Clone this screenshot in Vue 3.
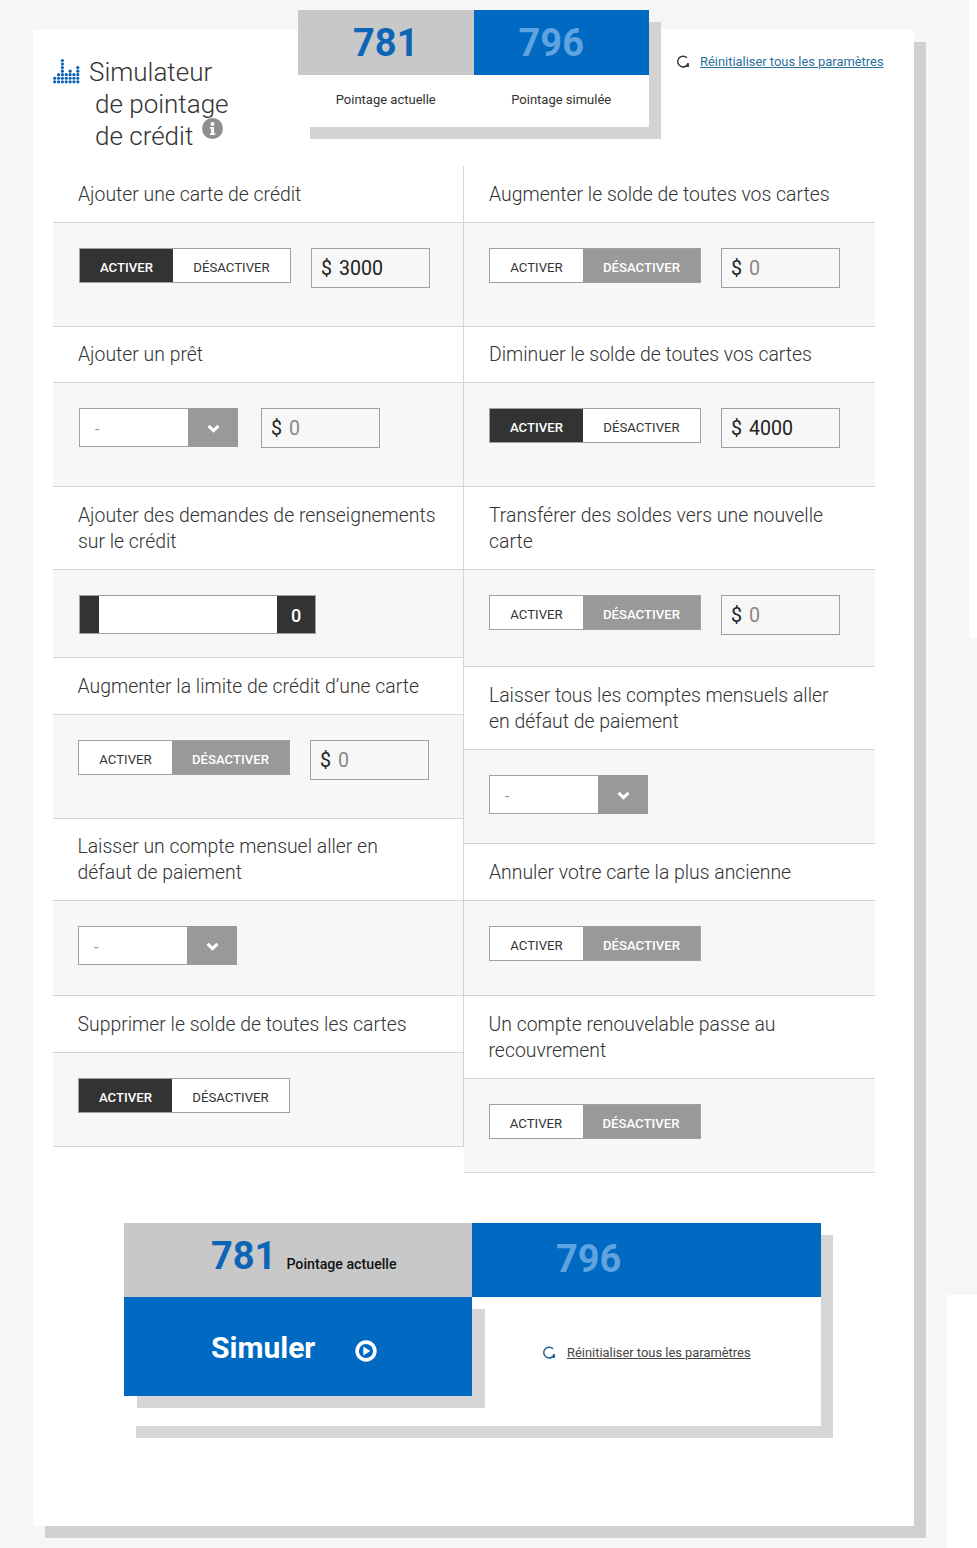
<script setup>
const leftRows = [
  { title: 'Ajouter une carte de crédit', titleH: 56, bodyH: 104, kind: 'toggle', on: true, value: '3000', pad: 26 },
  { title: 'Ajouter un prêt', titleH: 56, bodyH: 104, kind: 'select', value: '0', pad: 26 },
  { title: 'Ajouter des demandes de renseignements sur le crédit', titleH: 83, bodyH: 88, kind: 'slider', pad: 26 },
  { title: 'Augmenter la limite de crédit d’une carte', titleH: 57, bodyH: 104, kind: 'toggle', on: false, value: '0', pad: 25, tight: true },
  { title: 'Laisser un compte mensuel aller en défaut de paiement', titleH: 82, bodyH: 95, kind: 'select', pad: 25, tight: true },
  { title: 'Supprimer le solde de toutes les cartes', titleH: 57, bodyH: 94, kind: 'toggle', on: true, pad: 25, tight: true }
]
const rightRows = [
  { title: 'Augmenter le solde de toutes vos cartes', titleH: 56, bodyH: 104, kind: 'toggle', on: false, value: '0', pad: 25 },
  { title: 'Diminuer le solde de toutes vos cartes', titleH: 56, bodyH: 104, kind: 'toggle', on: true, value: '4000', pad: 25 },
  { title: 'Transférer des soldes vers une nouvelle carte', titleH: 83, bodyH: 97, kind: 'toggle', on: false, value: '0', pad: 25 },
  { title: 'Laisser tous les comptes mensuels aller en défaut de paiement', titleH: 83, bodyH: 94, kind: 'select', pad: 25 },
  { title: 'Annuler votre carte la plus ancienne', titleH: 57, bodyH: 95, kind: 'toggle', on: false, pad: 25 },
  { title: 'Un compte renouvelable passe au recouvrement', titleH: 83, bodyH: 94, kind: 'toggle', on: false, pad: 24.5, tight: true }
]
const columns = [
  { id: 'left', rows: leftRows },
  { id: 'right', rows: rightRows }
]
const barHeights = [2, 3, 7, 3, 4, 3, 5]
const dots = barHeights.flatMap((h, col) =>
  Array.from({ length: h }, (_, row) => ({ x: col * 3.85 + 1.7, y: 23.8 - row * 3.55 }))
)
</script>

<template>
  <div class="page">
    <main class="card">
      <header class="head">
        <div class="brand">
          <svg class="bars" viewBox="0 0 27 26" width="27" height="26">
            <circle v-for="(d, i) in dots" :key="i" :cx="d.x" :cy="d.y" r="1.6" fill="#0b62b4" />
          </svg>
          <h1 class="brand-title">
            <span class="l1">Simulateur</span>
            <span class="l2">de pointage</span>
            <span class="l2">de crédit
              <svg class="info" viewBox="0 0 20 20" width="21" height="21">
                <circle cx="10" cy="10" r="10" fill="#8e8e8e" />
                <circle cx="10" cy="5.6" r="1.9" fill="#fff" />
                <path d="M7.6 8.6h3.9v6h1.2v1.6H7.5v-1.6h1.2v-4.4H7.6z" fill="#fff" />
              </svg>
            </span>
          </h1>
        </div>
        <section class="scores">
          <div class="score-cell">
            <div class="num grey-bg blue-txt">781</div>
            <div class="lbl">Pointage actuelle</div>
          </div>
          <div class="score-cell">
            <div class="num sim blue-bg light-txt">796</div>
            <div class="lbl">Pointage simulée</div>
          </div>
        </section>
        <a class="reset top-reset">
          <svg class="spin" viewBox="0 0 14 14" width="14" height="14">
            <path d="M11 2.8A5.4 5.4 0 1 0 12.3 8" fill="none" stroke="#333" stroke-width="1.5" />
            <path d="M9.6 11.6l3.3.4.3-3.2z" fill="#333" />
          </svg>
          <span class="reset-text">Réinitialiser tous les paramètres</span>
        </a>
      </header>

      <div class="grid">
        <div v-for="col in columns" :key="col.id" class="col" :class="col.id">
          <div v-for="row in col.rows" :key="row.title">
            <div class="title" :class="{ tight: row.tight }" :style="{ height: row.titleH + 'px' }">
              <span class="title-text">{{ row.title }}</span>
            </div>
            <div class="body" :style="{ height: row.bodyH + 'px', paddingLeft: row.pad + 'px' }">
              <template v-if="row.kind === 'toggle'">
                <div class="toggle">
                  <span class="seg seg-a" :class="{ dark: row.on }">ACTIVER</span>
                  <span class="seg seg-b" :class="{ grey: !row.on }">DÉSACTIVER</span>
                </div>
              </template>
              <template v-else-if="row.kind === 'select'">
                <div class="select">
                  <span class="sel-val">-</span>
                  <span class="sel-btn">
                    <svg viewBox="0 0 12 8" width="13" height="9">
                      <path d="M1.4 1.6L6 6l4.6-4.4" fill="none" stroke="#fff" stroke-width="2.8" />
                    </svg>
                  </span>
                </div>
              </template>
              <template v-else>
                <div class="slider">
                  <span class="thumb"></span>
                  <span class="track"></span>
                  <span class="slide-val">0</span>
                </div>
              </template>
              <div v-if="row.value" class="amount" :class="{ gap: row.kind === 'select' }">
                <span class="dollar">$</span>
                <span class="amt" :class="{ muted: row.value === '0' }">{{ row.value }}</span>
              </div>
            </div>
          </div>
        </div>
      </div>

      <section class="summary">
        <div class="sum-cell">
          <div class="sum-top grey-bg">
            <span class="num-sm cur blue-txt">781</span>
            <span class="sum-lbl">Pointage actuelle</span>
          </div>
          <button class="simulate">
            <span class="sim-text">Simuler</span>
            <svg viewBox="0 0 22 22" width="22" height="22">
              <circle cx="11" cy="11" r="8.9" fill="none" stroke="#fff" stroke-width="3.6" />
              <path d="M8.3 6.4l7 4.6-7 4.6z" fill="#fff" />
            </svg>
          </button>
        </div>
        <div class="sum-cell">
          <div class="sum-top blue-bg right-top">
            <span class="num-sm light-txt">796</span>
          </div>
          <a class="reset bottom-reset">
            <svg class="spin" viewBox="0 0 14 14" width="14" height="14">
              <path d="M11 2.8A5.4 5.4 0 1 0 12.3 8" fill="none" stroke="#1d5f93" stroke-width="1.5" />
              <path d="M9.6 11.6l3.3.4.3-3.2z" fill="#1d5f93" />
            </svg>
            <span class="reset-text">Réinitialiser tous les paramètres</span>
          </a>
        </div>
      </section>
    </main>
  </div>
</template>

<style>
html, body { margin: 0; background: #fff; }
</style>

<style scoped>
.page {
  width: 977px;
  height: 1548px;
  box-sizing: border-box;
  padding: 30px 0 0 33px;
  font-family: Roboto, "Liberation Sans", sans-serif;
  color: #333;
  background:
    linear-gradient(#f6f6f6, #f6f6f6) 0 0 / 969px 638px no-repeat,
    linear-gradient(#f6f6f6, #f6f6f6) 0 638px / 977px 657px no-repeat,
    linear-gradient(#f6f6f6, #f6f6f6) 0 1295px / 947px 253px no-repeat;
}
.card {
  width: 881px;
  height: 1496px;
  background: #fff;
  box-shadow: 12px 12px 0 #d0d0d0;
}
.head {
  display: flex;
  align-items: flex-start;
  height: 137px;
  padding-left: 20px;
}
.brand {
  width: 245px;
  flex: none;
  position: relative;
}
.bars {
  position: absolute;
  left: 0;
  top: 28px;
}
.brand-title {
  margin: 0;
  padding: 26px 0 0 36px;
  font-weight: 300;
  font-size: 26px;
  line-height: 32px;
  color: #333;
}
.brand-title span {
  display: block;
  white-space: nowrap;
}
.l2 { padding-left: 6px; }
.info {
  position: relative;
  top: -10px;
  left: 2px;
  vertical-align: middle;
}
.scores {
  flex: none;
  display: flex;
  width: 351px;
  height: 117px;
  margin-top: -20px;
  background: #fff;
  box-shadow: 12px 12px 0 #d3d3d3;
}
.score-cell { flex: 1; }
.num {
  box-sizing: border-box;
  height: 65px;
  font-weight: 700;
  font-size: 38px;
  line-height: 66px;
  text-align: center;
}
.num.sim { padding-right: 20px; line-height: 67px; }
.grey-bg { background: #c8c8c8; }
.blue-bg { background: #0069c2; }
.blue-txt { color: #0d65b8; }
.light-txt { color: #5fa3e0; }
.lbl {
  margin-top: 17px;
  font-size: 13px;
  line-height: 16px;
  text-align: center;
  color: #333;
}
.reset {
  display: flex;
  align-items: center;
  gap: 10px;
  white-space: nowrap;
}
.top-reset {
  margin: 24px 0 0 27px;
  color: #2b6f9f;
}
.reset-text {
  font-size: 12.9px;
  line-height: 16px;
  text-decoration: underline;
}
.grid {
  display: flex;
  padding-left: 20px;
  align-items: flex-start;
}
.col { width: 411px; }
.col.left {
  border-right: 1px solid #d6d6d6;
  box-sizing: border-box;
  margin-top: -1px;
  padding-top: 1px;
}
.title {
  box-sizing: border-box;
  display: flex;
  align-items: center;
  padding: 1px 20px 0 25px;
  font-weight: 300;
  font-size: 19.4px;
  line-height: 26px;
  color: #333;
  border-bottom: 1px solid #d6d6d6;
}
.title.tight { padding-left: 24.5px; }
.title-text { max-width: 358px; }
.body {
  box-sizing: border-box;
  display: flex;
  align-items: flex-start;
  padding-top: 25px;
  background: #f7f7f7;
  border-bottom: 1px solid #d6d6d6;
}
.toggle {
  display: flex;
  width: 212px;
  height: 35px;
  box-sizing: border-box;
  border: 1px solid #a0a0a0;
  background: #fff;
  flex: none;
}
.seg {
  display: flex;
  align-items: center;
  justify-content: center;
  box-sizing: border-box;
  padding-top: 3px;
  font-size: 13.2px;
  font-weight: 400;
  color: #333;
}
.seg-a { width: 93px; }
.seg-b { flex: 1; }
.seg.dark { background: #333; color: #fff; font-weight: 500; }
.seg.grey { background: #999; color: #fff; font-weight: 500; }
.amount {
  box-sizing: border-box;
  display: flex;
  align-items: center;
  width: 119px;
  height: 40px;
  margin-left: 20px;
  padding-left: 9px;
  border: 1px solid #a0a0a0;
  flex: none;
  font-size: 19.6px;
}
.amount.gap { margin-left: 23px; }
.dollar { color: #222; }
.amt { margin-left: 7px; color: #222; }
.amt.muted { color: #888; }
.select {
  box-sizing: border-box;
  display: flex;
  width: 159px;
  height: 39px;
  border: 1px solid #a0a0a0;
  background: #fff;
  flex: none;
}
.sel-val {
  flex: 1;
  padding: 2px 0 0 15px;
  font-size: 16px;
  line-height: 38px;
  color: #999;
}
.sel-btn {
  display: flex;
  align-items: center;
  justify-content: center;
  width: 50px;
  margin: -1px -1px -1px 0;
  padding-top: 1px;
  background: #999;
}
.slider {
  box-sizing: border-box;
  display: flex;
  width: 237px;
  height: 39px;
  border: 1px solid #a0a0a0;
  background: #fff;
}
.thumb { width: 19px; background: #333; }
.track { flex: 1; }
.slide-val {
  width: 38px;
  background: #333;
  color: #fff;
  font-weight: 500;
  font-size: 18px;
  line-height: 39px;
  text-align: center;
}
.summary {
  display: flex;
  width: 697px;
  height: 203px;
  margin: 50px 0 0 91px;
  background: #fff;
  box-shadow: 12px 12px 0 #d6d6d6;
}
.sum-cell { width: 348px; }
.sum-cell:last-child { width: 349px; }
.sum-top {
  display: flex;
  align-items: flex-start;
  height: 74px;
  padding-left: 87px;
  box-sizing: border-box;
}
.right-top { padding-left: 84px; }
.num-sm {
  font-weight: 700;
  font-size: 38px;
  line-height: 73px;
}
.num-sm.cur { line-height: 66px; }
.sum-lbl {
  margin: 33px 0 0 10px;
  font-size: 14.2px;
  line-height: 17px;
  font-weight: 500;
  color: #111;
}
.simulate {
  display: flex;
  align-items: center;
  width: 100%;
  height: 99px;
  padding: 0 0 0 87px;
  border: 0;
  background: #0069c2;
  color: #fff;
  font-family: inherit;
  box-shadow: 13px 12px 0 #d6d6d6;
}
.sim-text {
  padding-top: 2px;
  font-size: 30px;
  font-weight: 700;
  margin-right: 40px;
}
.simulate svg { position: relative; top: 4px; }
.bottom-reset {
  height: 112px;
  padding-left: 70px;
  gap: 11px;
  color: #444;
}
</style>
